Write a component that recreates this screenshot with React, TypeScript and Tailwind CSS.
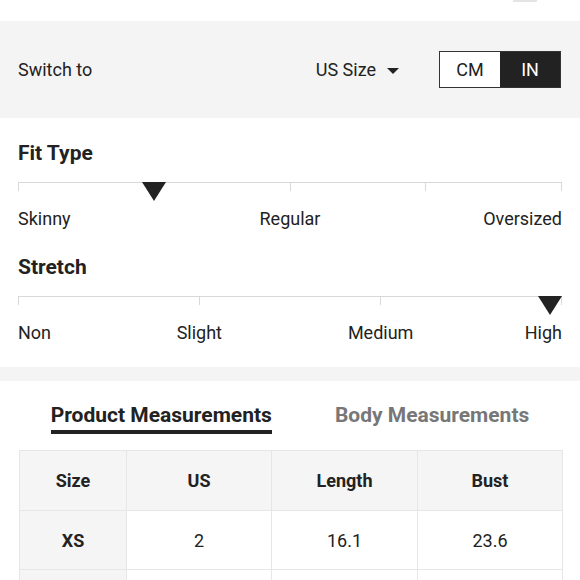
const rows = [
  { size: "XS", us: "2", length: "16.1", bust: "23.6" },
  { size: "", us: "", length: "", bust: "" },
];

function Marker() {
  return (
    <svg width="24" height="19" viewBox="0 0 24 19" className="block">
      <polygon points="0,0 24,0 12,19" fill="#222222" />
    </svg>
  );
}

function Track({ segments }: { segments: number }) {
  return (
    <div className="flex border-t border-[#d8d8d8]">
      {Array.from({ length: segments }).map((_, i) => (
        <div
          key={i}
          className={`h-2 flex-1 border-l border-[#d8d8d8] ${i === segments - 1 ? "border-r" : ""}`}
        />
      ))}
    </div>
  );
}

export default function App() {
  return (
    <div
      className="h-[580px] w-[580px] overflow-hidden bg-white text-[#222222]"
      style={{ fontFamily: "Roboto, 'Liberation Sans', sans-serif" }}
    >
      <div className="h-[21px]">
        <div className="ml-[513px] h-[2px] w-[24px] bg-[#e4e4e4]" />
      </div>

      <div className="flex h-[97px] items-center bg-[#f4f4f4] pl-[18px] pr-[19px] text-[18px]">
        <span>Switch to</span>
        <div className="ml-auto flex items-center gap-[11px]">
          <span>US Size</span>
          <svg width="12" height="6" viewBox="0 0 12 6" className="mt-[3px]">
            <polygon points="0,0 12,0 6,6" fill="#222222" />
          </svg>
        </div>
        <div className="ml-[40px] flex h-[37px] w-[122px] border-[1.5px] border-[#333333]">
          <div className="flex flex-1 items-center justify-center bg-white">CM</div>
          <div className="flex flex-1 items-center justify-center bg-[#222222] text-white">IN</div>
        </div>
      </div>

      <div className="px-[18px] pb-[22px] pt-[23px]">
        <h2 className="text-[21px] font-bold leading-6">Fit Type</h2>
        <div className="relative mt-[17px]">
          <Track segments={4} />
          <div className="absolute left-[124px] top-0">
            <Marker />
          </div>
        </div>
        <div className="mt-[16px] grid grid-cols-3 text-[18px] leading-6">
          <span className="text-left">Skinny</span>
          <span className="text-center">Regular</span>
          <span className="text-right">Oversized</span>
        </div>

        <h2 className="mt-[24px] text-[21px] font-bold leading-6">Stretch</h2>
        <div className="relative mt-[17px]">
          <Track segments={3} />
          <div className="absolute right-0 top-0">
            <Marker />
          </div>
        </div>
        <div className="mt-[16px] grid grid-cols-[1fr_2fr_2fr_1fr] text-[18px] leading-6">
          <span className="text-left">Non</span>
          <span className="text-center">Slight</span>
          <span className="text-center">Medium</span>
          <span className="text-right">High</span>
        </div>
      </div>

      <div className="h-[14px] bg-[#f4f4f4]" />

      <div className="px-[19px] pt-[22px]">
        <div className="flex justify-center gap-[63px] text-[21px] font-bold leading-6">
          <div className="flex flex-col">
            <span>Product Measurements</span>
            <div className="mt-[3px] h-[4px] bg-[#222222]" />
          </div>
          <span className="text-[#777777]">Body Measurements</span>
        </div>

        <table className="mt-[16px] w-[543px] table-fixed border-collapse text-center text-[18px]">
          <colgroup>
            <col className="w-[107px]" />
            <col className="w-[145px]" />
            <col className="w-[146px]" />
            <col className="w-[145px]" />
          </colgroup>
          <thead>
            <tr className="h-[60px] bg-[#f5f5f5]">
              <th className="border border-[#e6e6e6] font-bold">Size</th>
              <th className="border border-[#e6e6e6] font-bold">US</th>
              <th className="border border-[#e6e6e6] font-bold">Length</th>
              <th className="border border-[#e6e6e6] font-bold">Bust</th>
            </tr>
          </thead>
          <tbody>
            {rows.map((r, i) => (
              <tr key={i} className="h-[59px]">
                <td className="border border-[#e6e6e6] bg-[#f5f5f5] font-bold">{r.size}</td>
                <td className="border border-[#e6e6e6]">{r.us}</td>
                <td className="border border-[#e6e6e6]">{r.length}</td>
                <td className="border border-[#e6e6e6]">{r.bust}</td>
              </tr>
            ))}
          </tbody>
        </table>
      </div>
    </div>
  );
}
